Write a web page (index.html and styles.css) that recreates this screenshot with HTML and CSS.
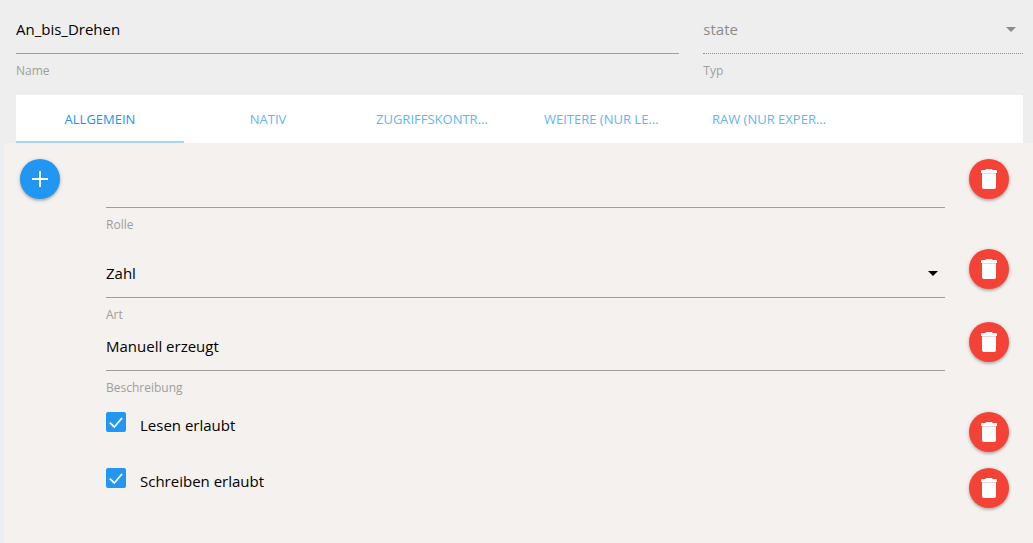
FILE: index.html
```html
<!DOCTYPE html>
<html lang="de">
  <head>
    <meta charset="UTF-8">
    <meta name="viewport" content="width=device-width, initial-scale=1.0">
    <title>An_bis_Drehen</title>
    <link rel="stylesheet" href="styles.css">
  </head>
  <body>
    <svg class="symbols" aria-hidden="true">
      <symbol id="icon-delete" viewBox="0 0 16 20">
        <path d="M0 2.2Q0 1 1 1h3.5q0-1 1-1h5q1 0 1 1H15q1 0 1 1.2V4H0z"/>
        <path d="M1 5h14v13q0 2-2 2H3q-2 0-2-2z"/>
        <path d="M1 4h14v1H1z" opacity=".75"/>
      </symbol>
      <symbol id="icon-arrow" viewBox="0 0 24 24">
        <path d="M7 10l5 5 5-5z"/>
      </symbol>
    </svg>

    <header class="object-header">
      <div class="field field-name">
        <input type="text" id="name" value="An_bis_Drehen">
        <label for="name">Name</label>
      </div>
      <div class="field field-type disabled">
        <select id="type" disabled>
          <option>state</option>
        </select>
        <svg class="arrow"><use href="#icon-arrow"/></svg>
        <label for="type">Typ</label>
      </div>
    </header>

    <nav class="tabs" role="tablist">
      <button class="tab active" role="tab" aria-selected="true">Allgemein</button>
      <button class="tab" role="tab">Nativ</button>
      <button class="tab" role="tab">Zugriffskontrolle</button>
      <button class="tab" role="tab">Weitere (nur Lesen)</button>
      <button class="tab" role="tab">Raw (nur Experten)</button>
    </nav>

    <main class="panel">
      <div class="row spaced">
        <button class="round add" aria-label="Hinzufügen">
          <svg width="16" height="16" viewBox="0 0 16 16"><path d="M7 0h2v7h7v2H9v7H7V9H0V7h7z"/></svg>
        </button>
        <div class="field">
          <input type="text" id="role" value="">
          <label for="role">Rolle</label>
        </div>
        <button class="round delete" aria-label="Rolle löschen"><svg width="16" height="20"><use href="#icon-delete"/></svg></button>
      </div>

      <div class="row">
        <div class="field">
          <select id="kind">
            <option>Zahl</option>
          </select>
          <svg class="arrow"><use href="#icon-arrow"/></svg>
          <label for="kind">Art</label>
        </div>
        <button class="round delete" aria-label="Art löschen"><svg width="16" height="20"><use href="#icon-delete"/></svg></button>
      </div>

      <div class="row spaced">
        <div class="field">
          <input type="text" id="desc" value="Manuell erzeugt">
          <label for="desc">Beschreibung</label>
        </div>
        <button class="round delete" aria-label="Beschreibung löschen"><svg width="16" height="20"><use href="#icon-delete"/></svg></button>
      </div>

      <div class="row check-row">
        <div class="check">
          <input type="checkbox" id="read" checked>
          <label for="read">Lesen erlaubt</label>
        </div>
        <button class="round delete" aria-label="Lesen löschen"><svg width="16" height="20"><use href="#icon-delete"/></svg></button>
      </div>

      <div class="row check-row">
        <div class="check">
          <input type="checkbox" id="write" checked>
          <label for="write">Schreiben erlaubt</label>
        </div>
        <button class="round delete" aria-label="Schreiben löschen"><svg width="16" height="20"><use href="#icon-delete"/></svg></button>
      </div>
    </main>
  </body>
</html>
```
FILE: styles.css
```css
* {
  box-sizing: border-box;
}

body {
  font-family: "Segoe UI", "Open Sans", "Noto Sans", sans-serif;
  font-size: 15px;
  background: #eeeeee;
  color: #000;
  margin: 0;
  min-height: 100vh;
  display: flex;
  flex-direction: column;
}

button,
input,
select {
  font: inherit;
  color: inherit;
  margin: 0;
}

.symbols {
  display: none;
}

.object-header {
  display: grid;
  grid-template-columns: repeat(12, 1fr);
  column-gap: 24px;
  padding: 5px 10px 17px 16px;
}

.field-name {
  grid-column: span 8;
}

.field-type {
  grid-column: span 4;
}

/* Text fields and selects */

.field {
  position: relative;
  min-width: 0;
}

.field input,
.field select {
  display: block;
  appearance: none;
  width: 100%;
  height: 49px;
  padding: 0;
  background: transparent;
  border: none;
  border-bottom: 1px solid #9e9e9e;
  border-radius: 0;
  outline: none;
}

.field label {
  display: block;
  padding-top: 10px;
  font-size: 12px;
  line-height: 14px;
  color: #9e9e9e;
}

.arrow {
  position: absolute;
  top: 12px;
  right: 0;
  width: 24px;
  height: 24px;
  pointer-events: none;
}

.disabled select {
  color: #8c8c8c;
  opacity: 1;
  border-bottom: 1px dotted #8c8c8c;
}

.disabled .arrow {
  fill: #8c8c8c;
}

/* Tabs */

.tabs {
  display: flex;
  height: 48px;
  margin: 0 10px 0 16px;
  background: #fff;
}

.tab {
  flex: 0 1 168px;
  min-width: 0;
  padding: 2px 24px 0;
  background: transparent;
  border: none;
  border-bottom: 2px solid transparent;
  color: #64b5f6;
  font-size: 13px;
  text-transform: uppercase;
  white-space: nowrap;
  overflow: hidden;
  text-overflow: ellipsis;
  cursor: pointer;
}

.tab.active {
  color: #2196f3;
  border-bottom-color: #a6d5fa;
}

/* Attribute rows */

.panel {
  flex: 1;
  background: #f5f1ee;
  border-left: 4px solid #eceff1;
  padding: 16px 24px 16px 16px;
}

.row {
  display: grid;
  grid-template-columns: 62px 1fr 40px;
  column-gap: 24px;
  align-items: start;
}

.row.spaced {
  margin-bottom: 17px;
}

.row.check-row {
  margin-bottom: 16px;
}

.row .field,
.check {
  grid-column: 2;
}

.round {
  width: 40px;
  height: 40px;
  padding: 0;
  display: flex;
  align-items: center;
  justify-content: center;
  border: none;
  border-radius: 50%;
  box-shadow: 0 2px 2px rgba(0, 0, 0, 0.14), 0 1px 4px rgba(0, 0, 0, 0.2);
  fill: #fff;
  cursor: pointer;
}

.add {
  background: #2196f3;
}

.delete {
  background: #f44336;
}

.check {
  display: flex;
  align-items: flex-start;
  gap: 14px;
}

.check input {
  appearance: none;
  width: 20px;
  height: 20px;
  border: 2px solid #5a5a5a;
  border-radius: 2px;
}

.check input:checked {
  border: none;
  background: #2196f3 url("data:image/svg+xml,%3Csvg xmlns='http://www.w3.org/2000/svg' viewBox='0 0 20 20'%3E%3Cpath d='M3.8 10.6L8.3 15 16 6' fill='none' stroke='white' stroke-width='1.8'/%3E%3C/svg%3E");
}

.check label {
  line-height: 27px;
}
```
